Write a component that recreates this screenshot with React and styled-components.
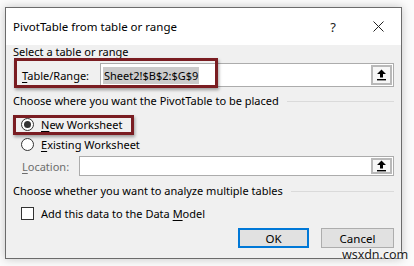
import React from "react";
import styled, { createGlobalStyle } from "styled-components";

const GlobalStyle = createGlobalStyle`
  body {
    margin: 0;
    background: #fbfbfb;
    font-family: "Noto Sans", "Open Sans", sans-serif;
    font-size: 11px;
    color: #000;
  }
`;

const Page = styled.div`
  position: relative;
  width: 414px;
  height: 266px;
  padding: 7px 0 0 5px;
  box-sizing: border-box;
  overflow: hidden;
`;

const Dialog = styled.div`
  width: 397px;
  height: 252px;
  box-sizing: border-box;
  border: 1px solid #6b6b6b;
  background: #f0f0f0;
  box-shadow: 0 0 9px rgba(0, 0, 0, 0.22);
  display: flex;
  flex-direction: column;
`;

const TitleBar = styled.div`
  height: 37px;
  background: #fff;
  display: flex;
  align-items: center;
  padding: 0 0 0 7px;
  font-size: 11.5px;
`;

const Title = styled.div`
  flex: 1;
`;

const TitleButton = styled.div`
  width: ${({ w }) => w}px;
  display: flex;
  justify-content: center;
  align-items: center;
  font-size: 13px;
  color: #222;
`;

const Body = styled.div`
  padding: 0 7px;
  display: flex;
  flex-direction: column;
`;

const GroupHeader = styled.div`
  display: flex;
  align-items: center;
  height: 14px;
  line-height: 14px;
  margin-top: ${({ top }) => top}px;
  white-space: nowrap;

  &::after {
    content: "";
    flex: 1;
    margin-left: 8px;
    border-top: 1px solid ${({ line }) => (line ? "#dadada" : "transparent")};
  }
`;

const Row = styled.div`
  position: relative;
  display: flex;
  align-items: center;
  height: ${({ h }) => h}px;
  margin-top: ${({ top }) => top}px;
  padding-left: ${({ indent }) => indent}px;
`;

const Label = styled.span`
  width: ${({ w }) => w}px;
  color: ${({ muted }) => (muted ? "#6d6d6d" : "#000")};
  white-space: nowrap;

  u {
    text-decoration-thickness: 1px;
    text-underline-offset: 2px;
  }
`;

const Field = styled.div`
  flex: 1;
  align-self: stretch;
  display: flex;
  align-items: center;
  background: #fff;
  border: 1px solid #acacac;
  padding-left: 2px;
`;

const Selected = styled.span`
  background: #cbcbcb;
  padding: 1px;
`;

const Spacer = styled.div`
  flex: 1;
`;

const PickButton = styled.div`
  width: 17px;
  align-self: stretch;
  margin: 1px;
  border: 2px solid #b9b9b9;
  background: #f7f7f7;
  display: flex;
  align-items: center;
  justify-content: center;
`;

const Highlight = styled.div`
  position: absolute;
  left: ${({ l }) => l}px;
  top: ${({ t }) => t}px;
  width: ${({ w }) => w}px;
  height: ${({ h }) => h}px;
  border: 3px solid #7a1d22;
  box-sizing: border-box;
  box-shadow: 1px 2px 3px rgba(0, 0, 0, 0.35);
  pointer-events: none;
`;

const Radio = styled.span`
  width: 13px;
  height: 13px;
  border-radius: 50%;
  border: 1px solid #333;
  background: #fff;
  box-sizing: border-box;
  display: flex;
  align-items: center;
  justify-content: center;
  margin-right: 7px;

  &::after {
    content: "";
    width: 7px;
    height: 7px;
    border-radius: 50%;
    background: ${({ checked }) => (checked ? "#333" : "transparent")};
  }
`;

const Checkbox = styled.span`
  width: 13px;
  height: 13px;
  border: 1px solid #333;
  background: #fff;
  box-sizing: border-box;
  margin-right: 7px;
`;

const Buttons = styled.div`
  display: flex;
  justify-content: flex-end;
  gap: 12px;
  margin-top: 5px;
`;

const Button = styled.div`
  width: ${({ w }) => w}px;
  height: 20px;
  box-sizing: border-box;
  background: #e1e1e1;
  border: ${({ primary }) => (primary ? "2px solid #0078d7" : "1px solid #adadad")};
  display: flex;
  align-items: center;
  justify-content: center;
  font-size: 11.5px;
`;

const Watermark = styled.div`
  position: absolute;
  left: 342px;
  top: 246px;
  font-size: 12.5px;
  color: #222;
  text-shadow: 0 0 2px #fff, 0 0 2px #fff;
`;

const UpArrow = () => (
  <svg width="11" height="12" viewBox="0 0 11 12">
    <path d="M5.5 0.5 L10 5 L7 5 L7 8.5 L4 8.5 L4 5 L1 5 Z" fill="#000" />
    <rect x="1" y="10" width="9" height="1.4" fill="#000" />
  </svg>
);

const CloseIcon = () => (
  <svg width="11" height="11" viewBox="0 0 11 11">
    <path d="M0.5 0.5 L10.5 10.5 M10.5 0.5 L0.5 10.5" stroke="#222" strokeWidth="1" />
  </svg>
);

export default function App() {
  return (
    <Page>
      <GlobalStyle />
      <Dialog>
        <TitleBar>
          <Title>PivotTable from table or range</Title>
          <TitleButton w={22}>?</TitleButton>
          <TitleButton w={11} />
          <TitleButton w={46}>
            <CloseIcon />
          </TitleButton>
        </TitleBar>
        <Body>
          <GroupHeader top={0}>Select a table or range</GroupHeader>
          <Row h={24} top={4} indent={9}>
            <Label w={78}>
              <u>T</u>able/Range:
            </Label>
            <Field>
              <Selected>Sheet2!$B$2:$G$9</Selected>
              <Spacer />
              <PickButton>
                <UpArrow />
              </PickButton>
            </Field>
            <Highlight l={1} t={-5} w={204} h={30} />
          </Row>

          <GroupHeader top={7} line>
            Choose where you want the PivotTable to be placed
          </GroupHeader>
          <Row h={20} top={6} indent={8}>
            <Radio checked />
            <Label>
              <u>N</u>ew Worksheet
            </Label>
            <Highlight l={0} t={1} w={121} h={20} />
          </Row>
          <Row h={20} top={0} indent={8}>
            <Radio />
            <Label>
              <u>E</u>xisting Worksheet
            </Label>
          </Row>
          <Row h={20} top={2} indent={9}>
            <Label w={57} muted>
              <u>L</u>ocation:
            </Label>
            <Field>
              <Spacer />
              <PickButton>
                <UpArrow />
              </PickButton>
            </Field>
          </Row>

          <GroupHeader top={8} line>
            Choose whether you want to analyze multiple tables
          </GroupHeader>
          <Row h={20} top={5} indent={8}>
            <Checkbox />
            <Label>
              Add this data to the Data <u>M</u>odel
            </Label>
          </Row>

          <Buttons>
            <Button w={71} primary>
              OK
            </Button>
            <Button w={73}>Cancel</Button>
          </Buttons>
        </Body>
      </Dialog>
      <Watermark>wsxdn.com</Watermark>
    </Page>
  );
}
